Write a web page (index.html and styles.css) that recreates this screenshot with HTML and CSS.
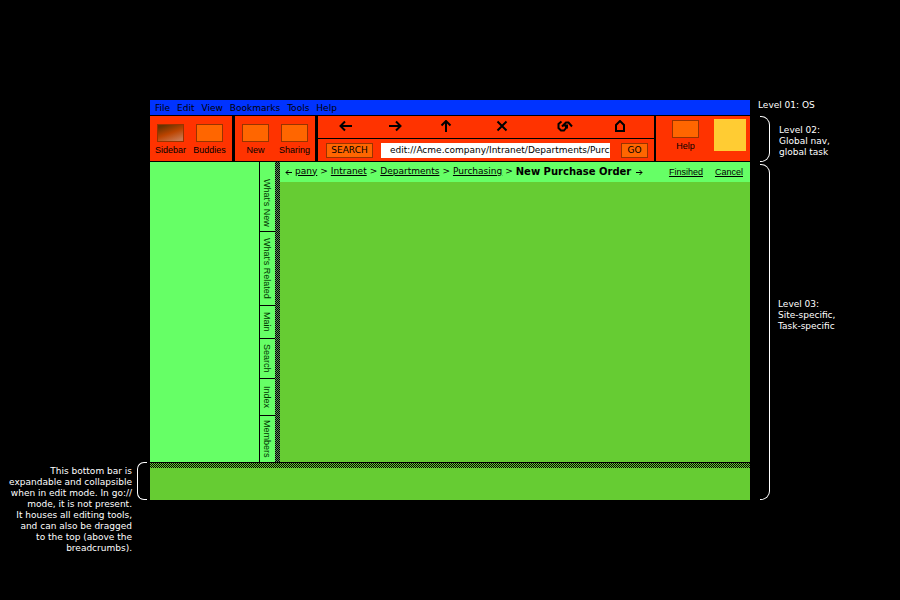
FILE: index.html
```html
<!DOCTYPE html>
<html lang="en">
<head>
<meta charset="utf-8">
<title>New Purchase Order</title>
<link rel="stylesheet" href="styles.css">
</head>
<body>
<main class="sheet">
  <nav class="menu" aria-label="Menu">
    <a href="#">File</a><a href="#">Edit</a><a href="#">View</a><a href="#">Bookmarks</a><a href="#">Tools</a><a href="#">Help</a>
  </nav>

  <header class="toolbar">
    <div class="group">
      <button class="tool"><span class="swatch active"></span>Sidebar</button>
      <button class="tool"><span class="swatch"></span>Buddies</button>
    </div>
    <div class="group">
      <button class="tool"><span class="swatch"></span>New</button>
      <button class="tool"><span class="swatch"></span>Sharing</button>
    </div>
    <div class="browse">
      <div class="arrows">
        <button aria-label="Back"><svg viewBox="0 0 16 12"><path d="M14 6H3M7 1.500L2.500 6L7 10.500"/></svg></button>
        <button aria-label="Forward"><svg viewBox="0 0 16 12"><path d="M2 6h11M9 1.500L13.500 6L9 10.500"/></svg></button>
        <button aria-label="Up"><svg viewBox="0 0 16 12"><path d="M8 12V1M3.500 5.500L8 1L12.500 5.500"/></svg></button>
        <button aria-label="Stop"><svg viewBox="0 0 16 12"><path d="M3.500 1.500l9 9M12.500 1.500l-9 9"/></svg></button>
        <button aria-label="Reload"><svg viewBox="0 0 16 12"><path d="M4.500 1.500L1.500 4v4L4 10.500h3L9 8V6M5 6.500L9 2.500h2.500L15 6.500M6 5.500h4v3"/></svg></button>
        <button aria-label="Home"><svg viewBox="0 0 16 12"><path d="M4 11V5L8 1l4 4v6z"/></svg></button>
      </div>
      <form class="location">
        <button class="key" type="button">SEARCH</button>
        <input class="address" type="text" aria-label="Address" value="edit://Acme.company/Intranet/Departments/Purchasing">
        <button class="key go" type="button">GO</button>
      </form>
    </div>
    <div class="assist">
      <button class="tool"><span class="swatch"></span>Help</button>
      <span class="brand"></span>
    </div>
  </header>

  <section class="workspace">
    <aside class="sidebar"></aside>
    <nav class="tabs" aria-label="Sidebar panels">
      <button class="lead">What's New</button>
      <button>What's Related</button>
      <button>Main</button>
      <button>Search</button>
      <button>Index</button>
      <button>Members</button>
    </nav>
    <div class="grip"></div>
    <div class="content">
      <div class="trail">
        <svg class="mini" viewBox="0 0 7 7"><path d="M7 3.500H1M3.500 1L1 3.500L3.500 6"/></svg>
        <nav class="crumbs" aria-label="Breadcrumbs">
          <a href="#">pany</a> &gt; <a href="#">Intranet</a> &gt; <a href="#">Departments</a> &gt; <a href="#">Purchasing</a> &gt; <strong>New Purchase Order</strong>
        </nav>
        <svg class="mini" viewBox="0 0 7 7"><path d="M0 3.500H6M3.500 1L6 3.500L3.500 6"/></svg>
        <div class="actions"><a href="#">Finsihed</a><a href="#">Cancel</a></div>
      </div>
    </div>
  </section>

  <section class="editbar"></section>

  <p class="level level-1">Level 01: OS</p>
  <div class="level level-2"><span class="brace"></span><p>Level 02:<br>Global nav,<br>global task</p></div>
  <div class="level level-3"><span class="brace"></span><p>Level 03:<br>Site-specific,<br>Task-specific</p></div>
  <div class="note"><p>This bottom bar is<br>expandable and collapsible<br>when in edit mode. In go://<br>mode, it is not present.<br>It houses all editing tools,<br>and can also be dragged<br>to the top (above the<br>breadcrumbs).</p><span class="brace left"></span></div>
</main>
</body>
</html>
```
FILE: styles.css
```css
* { box-sizing: border-box; }

body {
  margin: 0;
  background: #000;
  color: #000;
  font: 9px/11px "DejaVu Sans", sans-serif;
}

p { margin: 0; }
a { color: inherit; }

button {
  margin: 0;
  padding: 0;
  border: 0;
  background: none;
  color: inherit;
  font: inherit;
}

.sheet {
  display: grid;
  grid-template-columns: 1fr minmax(0, 4fr) 1fr;
  grid-template-rows: 1fr 16px 46px 3fr 38px 1fr;
  min-height: 100vh;
}

.menu, .toolbar, .workspace, .editbar { grid-column: 2; }

/* Menu bar */
.menu {
  grid-row: 2;
  display: flex;
  align-items: center;
  gap: 7px;
  padding: 2px 0 0 5px;
  background: #03f;
  border-bottom: 1px solid #000;
}
.menu a { text-decoration: none; }

/* Toolbar */
.toolbar {
  grid-row: 3;
  display: flex;
  background: #f30;
  border-bottom: 1px solid #000;
}
.group {
  display: flex;
  padding: 8px 1px 0;
  border-right: 3px solid #000;
}
.group:first-child { padding-right: 3px; }
.tool {
  display: flex;
  flex-direction: column;
  align-items: center;
  align-self: flex-start;
  gap: 3px;
  width: 39px;
  font: 9px/11px "Liberation Sans", sans-serif;
}
.swatch {
  width: 27px;
  height: 18px;
  background: #f60;
  border: 1px solid #930;
}
.swatch.active {
  background: linear-gradient(160deg, #630 10%, #b40 50%, #c97850 90%);
}
.browse {
  flex: 1;
  min-width: 0;
  display: flex;
  flex-direction: column;
}
.arrows {
  display: grid;
  grid-template-columns: 56fr 42fr 60fr 52fr 74fr 36fr 16fr;
  align-items: center;
  height: 23px;
  padding-bottom: 2px;
  border-bottom: 1px solid #000;
}
.arrows button {
  display: flex;
  justify-content: center;
}
.arrows svg {
  width: 16px;
  height: 12px;
  fill: none;
  stroke: #000;
  stroke-width: 2;
}
.location {
  display: flex;
  align-items: center;
  flex: 1;
  margin: 0;
  padding: 0 6px 0 8px;
}
.key {
  width: 47px;
  height: 15px;
  background: #f60;
  border: 1px solid #930;
}
.key.go { width: 27px; }
.address {
  flex: 1;
  min-width: 0;
  height: 15px;
  margin: 0 11px 0 8px;
  padding: 0 0 0 9px;
  border: 0;
  background: #fff;
  color: #000;
  font: inherit;
}
.assist {
  display: flex;
  justify-content: space-between;
  align-items: flex-start;
  width: 96px;
  padding: 3px 4px 0 10px;
  border-left: 2px solid #000;
}
.assist .tool { padding-top: 1px; }
.brand {
  width: 32px;
  height: 32px;
  background: #fc3;
}

/* Workspace */
.workspace {
  grid-row: 4;
  display: grid;
  grid-template-columns: 110px 15px 5px 1fr;
  background: #6c3;
}
.sidebar {
  background: #6f6;
  border-right: 1px solid #000;
}
.tabs {
  display: grid;
  grid-template-rows: 70fr 74fr 33fr 40fr 37fr 46fr;
  background: #6f6;
}
.tabs button {
  writing-mode: vertical-rl;
  width: 15px;
  padding-right: 3px;
  border-bottom: 1px solid #000;
  color: #030;
  font: 9px/11px "Liberation Sans", sans-serif;
}
.tabs .lead { padding-top: 12px; }
.tabs button:last-child { border-bottom: 0; }

.grip {
  background: repeating-conic-gradient(#000 0 25%, #5c8f5c 0 50%) 0 0 / 2px 2px;
}
.trail {
  display: flex;
  align-items: center;
  height: 20px;
  padding: 0 7px 2px 5px;
  background: #6f6;
  white-space: nowrap;
}
.mini {
  width: 7px;
  height: 7px;
  margin-top: 3px;
  fill: none;
  stroke: #000;
}
.crumbs {
  display: flex;
  gap: 3px;
  margin: 0 5px 0 3px;
}
.crumbs strong { font-size: 10px; }
.actions {
  display: flex;
  gap: 12px;
  margin-left: auto;
  padding-top: 2px;
  font: 9px/11px "Liberation Sans", sans-serif;
}

.editbar {
  grid-row: 5;
  background: #6c3;
  border-top: 1px solid #000;
}
.editbar::before {
  content: "";
  display: block;
  height: 5px;
  background: repeating-conic-gradient(#000 0 25%, #6c3 0 50%) 0 0 / 2px 2px;
}

/* Annotations */
.level, .note { color: #fff; white-space: nowrap; }
.level { grid-column: 3; }
.level-1 { grid-row: 2; padding-left: 8px; }
.level-2 {
  grid-row: 3;
  display: flex;
  align-items: center;
  gap: 9px;
  padding-left: 10px;
}
.level-2 p { padding-top: 4px; }
.level-3 {
  grid-row: 4 / span 2;
  display: flex;
  align-items: center;
  gap: 8px;
  padding: 2px 0 0 10px;
}
.level-3 p { padding-bottom: 34px; }
.brace {
  align-self: stretch;
  width: 10px;
  border: 1px solid #fff;
  border-left: 0;
  border-radius: 0 9px 9px 0;
}
.note {
  grid-column: 1;
  grid-row: 5 / span 2;
  display: flex;
  justify-content: flex-end;
  align-items: flex-start;
  gap: 5px;
  padding-right: 3px;
  text-align: right;
}
.note p { padding-top: 4px; }
.brace.left {
  height: 38px;
  align-self: flex-start;
  border: 1px solid #fff;
  border-right: 0;
  border-radius: 7px 0 0 7px;
}
```
